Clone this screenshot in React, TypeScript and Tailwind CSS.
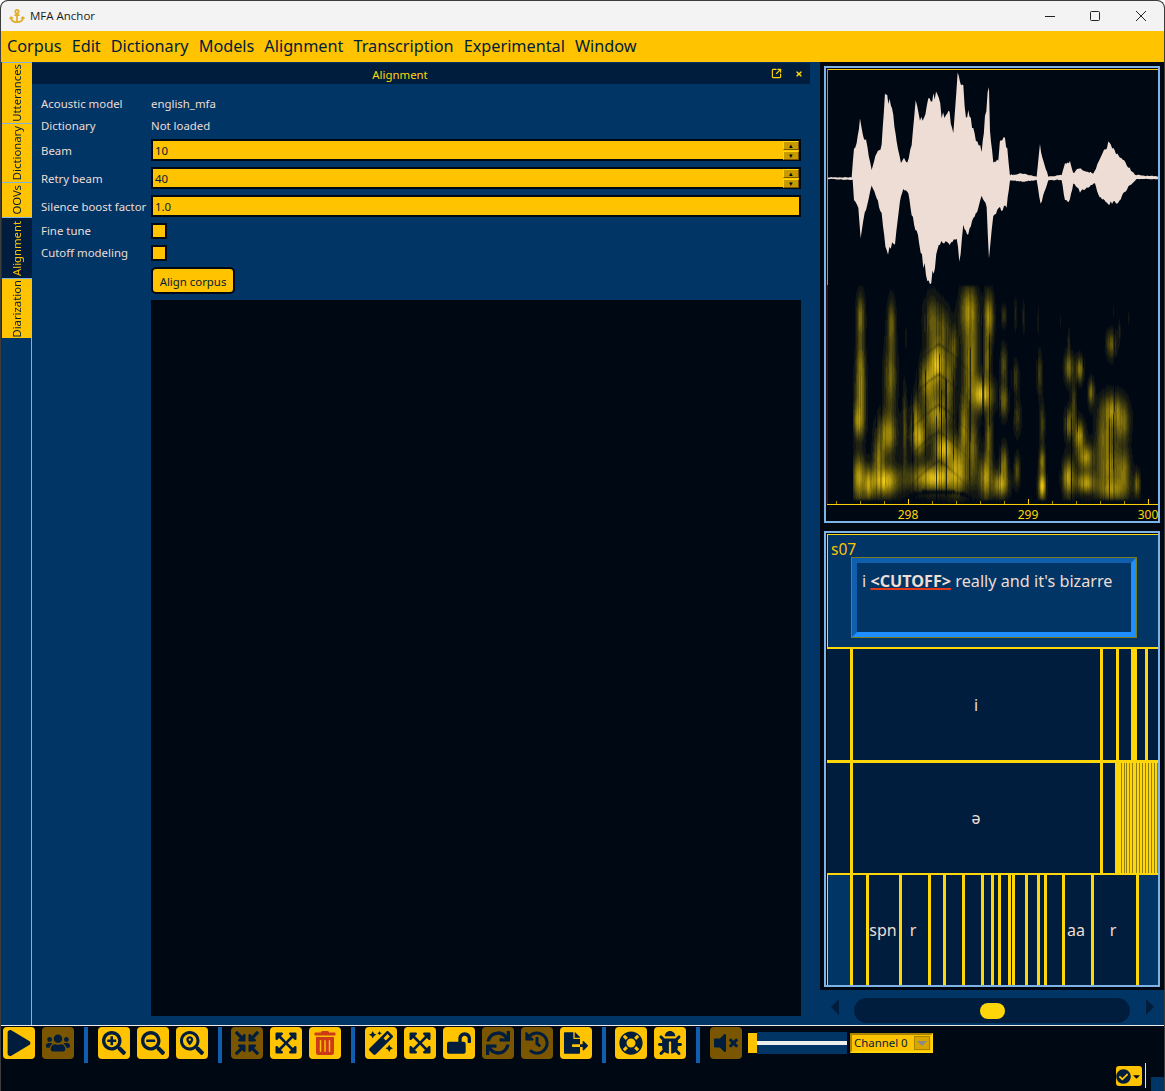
import React from "react";
import {
  FaPlay, FaUsers, FaSearchPlus, FaSearchMinus, FaSearchLocation, FaCompressArrowsAlt,
  FaExpandArrowsAlt, FaTrashAlt, FaMagic, FaLockOpen, FaSync, FaHistory, FaFileExport,
  FaLifeRing, FaBug, FaVolumeMute, FaCheckCircle, FaTimes, FaAnchor, FaCaretDown,
} from "react-icons/fa";
import { SquareArrowOutUpRight } from "lucide-react";

let seed = 7;
const rnd = () => ((seed = (seed * 16807) % 2147483647) / 2147483647);

const top = [[383,532],[455,532],[462,440],[470,435],[480,350],[488,400],[498,420],[515,512],[530,455],[545,440],[555,280],[565,300],[580,340],[590,430],[603,490],[612,475],[622,490],[635,430],[647,300],[660,350],[672,360],[685,300],[712,285],[725,340],[738,355],[745,330],[760,390],[773,210],[780,260],[790,270],[798,360],[805,330],[820,390],[832,430],[845,450],[855,360],[867,248],[870,390],[880,490],[895,480],[900,418],[915,420],[922,450],[930,525],[965,520],[1010,530],[1020,435],[1030,480],[1045,530],[1085,525],[1095,490],[1110,487],[1120,520],[1135,505],[1180,520],[1200,480],[1225,430],[1260,470],[1285,500],[1305,525],[1374,530]];
const bottom = [[1374,537],[1310,537],[1285,560],[1255,605],[1225,610],[1195,585],[1185,550],[1140,575],[1120,550],[1110,600],[1095,605],[1085,540],[1045,540],[1022,615],[1010,540],[970,545],[930,540],[920,620],[900,628],[880,640],[867,790],[860,620],[845,590],[835,630],[820,650],[805,700],[790,670],[778,795],[770,710],[745,740],[720,730],[690,858],[670,790],[650,700],[635,640],[625,580],[610,565],[600,600],[585,720],[560,760],[545,640],[515,555],[490,660],[482,718],[475,620],[462,600],[458,540],[383,537]];
function roughen(pts: number[][]) {
  const out: string[] = [];
  for (let i = 0; i < pts.length - 1; i++) {
    const [x0, y0] = pts[i];
    const [x1, y1] = pts[i + 1];
    const n = Math.max(1, Math.round(Math.abs(x1 - x0) / 4));
    for (let k = 0; k < n; k++) {
      const t = k / n;
      const y = y0 + (y1 - y0) * t;
      const amp = Math.min(14, Math.abs(y - 534) * 0.07) + 1;
      out.push(`${(x0 + (x1 - x0) * t).toFixed(1)},${(y + (rnd() - 0.5) * amp * 2).toFixed(1)}`);
    }
  }
  out.push(pts[pts.length - 1].join(","));
  return out;
}
const wave = [...roughen(top), ...roughen(bottom)].join(" ");

// cx, cy, rx, ry, strength, in the 3x crop's coordinates of the spectrogram
const blobs: number[][] = [
  [135,110,16,75,.65],[135,250,16,90,.55],[135,340,20,100,.65],[130,420,20,55,.8],[130,590,24,75,.85],[160,610,18,45,.8],
  [228,130,16,80,.55],[225,290,24,110,.6],[215,460,36,70,.8],[205,600,55,50,1],[190,530,20,60,.6],
  [268,440,9,130,.45],[272,170,4,40,.2],
  [350,120,30,80,.55],[385,140,24,70,.45],[365,250,32,80,1],[335,300,28,70,.75],[400,300,22,90,.55],
  [365,400,50,70,.8],[310,470,28,60,.85],[385,505,38,50,1],[360,590,100,45,1],[425,560,32,80,.8],
  [300,410,16,70,.55],[415,200,15,70,.5],
  [460,90,32,80,.75],[465,240,30,140,.7],[500,340,40,50,1],[520,110,18,80,.8],[515,240,14,80,.6],[445,440,14,100,.7],[520,470,14,100,.6],
  [470,500,22,110,.6],[510,590,24,70,.8],[555,610,30,42,.85],[565,550,15,60,.7],[565,360,16,55,.6],[565,250,13,60,.5],[565,105,11,35,.35],
  [600,100,7,55,.25],[625,110,6,55,.25],[600,290,13,55,.4],[605,410,16,60,.35],[605,570,12,50,.5],
  [668,120,4,45,.22],[672,280,11,70,.4],[680,430,11,70,.4],[680,540,12,40,.65],[680,615,15,45,1],
  [735,120,4,40,.15],[760,180,5,45,.25],[760,260,17,50,.65],[793,265,15,42,.7],[760,430,16,50,.65],[792,465,19,50,.85],
  [758,590,22,60,.85],[810,530,30,42,.8],[810,605,38,36,.85],[827,335,12,42,.65],[775,370,11,70,.4],
  [888,190,20,45,.55],[912,150,5,32,.25],[940,110,4,32,.15],[895,90,4,32,.15],
  [890,390,44,56,.75],[870,470,34,70,.6],[920,430,28,60,.6],[880,560,44,70,.7],[925,570,26,70,.6],[890,625,54,36,.7],[965,610,12,42,.6],
];
const chevApex = [190, 280, 372, 452, 540];

function buildSpectrogram() {
  const levels: string[] = Array.from({ length: 16 }, () => "");
  const X0 = 853, X1 = 1141, Y0 = 286, Y1 = 502;
  for (let x = X0; x < X1; x++) {
    const cx = (x - 815) * 3;
    const r = rnd();
    const col = r < 0.14 ? 0.15 + rnd() * 0.25 : 0.72 + rnd() * 0.28;
    const start = 20 + rnd() * 400;
    const len = 60 + rnd() * 300;
    for (let y = Y0; y < Y1; y += 2) {
      const cy = (y - 280) * 3;
      let keep = 1;
      for (const b of blobs) {
        const dx = (cx - b[0]) / (b[2] * 0.82);
        const dy = (cy - b[1]) / (b[3] * 0.95);
        const d = dx * dx + dy * dy;
        if (d < 6) keep *= 1 - b[4] * Math.exp(-d) * 0.88;
      }
      let v = Math.pow(1 - keep, 1.4);
      if (cy > start && cy < start + len) v *= col;
      else v *= 0.6 + col * 0.4;
      const off = Math.abs(cx - 370);
      if (off < 100) {
        for (const a of chevApex) {
          const curve = a + off * 0.62 + (off * off) / 300;
          const dist = Math.abs(cy - curve);
          if (dist < 10) v *= 1 - 0.6 * Math.exp(-(dist * dist) / 10) * (1 - off / 110);
        }
      }
      const base = off < 100 ? 650 - Math.sqrt(Math.max(0, 1 - (off / 90) ** 2)) * 18 : 662;
      if (Math.abs(cy - base) < 5) v *= 0.15;
      if (cy > 662) v *= 0.25;
      const li = Math.min(15, Math.round(v * 17));
      if (li > 0) levels[li] += `M${x} ${y}h1v2h-1z`;
    }
  }
  return levels;
}
const specLevels = buildSpectrogram();

function Signal() {
  return (
    <svg viewBox="826 68 332 453" className="block h-[453px] w-[332px] overflow-visible">
      <defs>
        <filter id="soft" x="-2%" y="-2%" width="104%" height="104%"><feGaussianBlur stdDeviation="0.35 1" /></filter>
      </defs>
      <g transform="translate(700 0) scale(0.3333)">
        <polygon points={wave} fill="#EDDDD4" />
      </g>
      <g filter="url(#soft)">
        {specLevels.map((d, i) => (d ? <path key={i} d={d} fill="#FFD60A" opacity={i / 15} /> : null))}
      </g>
      <g transform="translate(815 280) scale(0.3333)">
        <rect x="36" y="672" width="993" height="3" fill="#FFD60A" />
        {[280, 640, 1000].map((x) => <rect key={x} x={x - 1} y="657" width="3" height="15" fill="#FFD60A" />)}
        {[64, 136, 208, 352, 424, 496, 568, 712, 784, 856, 928].map((x) => <rect key={x} x={x} y="663" width="2" height="9" fill="#FFD60A" />)}
        <rect x="35" y="0" width="3" height="672" fill="#8a1010" />
      </g>
      {[[908, "298"], [1028, "299"], [1148, "300"]].map(([x, t]) => (
        <text key={t as string} x={x as number} y="519" textAnchor="middle" fontSize="12" fill="#FFD60A">{t}</text>
      ))}
      <rect x="827" y="69" width="331" height="1" fill="#FFC300" />
      <rect x="827" y="69" width="1" height="216" fill="#E8831A" />
    </svg>
  );
}

const row1 = [851, 1101, 1117, 1132, 1135, 1146];
const row3 = [851, 867, 900, 929, 944, 963, 982, 992, 999, 1009, 1013, 1026, 1038, 1045, 1063, 1092, 1137];
const dense = [1121, 1124, 1126, 1129, 1132, 1136, 1139, 1142, 1145, 1148, 1151, 1154, 1157];

function Bound({ x, base = 827 }: { x: number; base?: number }) {
  return <div className="absolute top-0 bottom-0 w-[3px] bg-[#FFD60A]" style={{ left: x - base - 1 }} />;
}
function TierLabel({ x, base = 827, children }: { x: number; base?: number; children: React.ReactNode }) {
  return (
    <span className="absolute top-1/2 -translate-x-1/2 -translate-y-1/2 text-[16px] leading-none text-[#EDDDD4]" style={{ left: x - base }}>
      {children}
    </span>
  );
}

function Btn({ icon: I, dim, red, px = 24 }: { icon: any; dim?: boolean; red?: boolean; px?: number }) {
  return (
    <div className={`flex h-8 w-8 shrink-0 items-center justify-center rounded-[4px] ${dim ? "bg-[#7A5600]" : "bg-[#FFC300]"} ${red ? "text-[#CC3A1A]" : "text-[#001D3D]"}`}>
      <I size={px} />
    </div>
  );
}
const Sep = ({ r = 10 }: { r?: number }) => (
  <div className="ml-[10px] h-9 w-1 shrink-0 self-start bg-[#0F5FAE]" style={{ marginRight: r }} />
);
const Gap = () => <div className="w-[7px] shrink-0" />;

function Spin() {
  return (
    <div className="flex h-full w-4 flex-col gap-px">
      {["▴", "▾"].map((g) => (
        <div key={g} className="flex flex-1 items-center justify-center border border-t-[#FFD60A] border-l-[#FFD60A] border-r-[#7A5600] border-b-[#7A5600] bg-[#C79A00] text-[7px] leading-none text-[#000814]">
          {g}
        </div>
      ))}
    </div>
  );
}

function NumInput({ v, spin }: { v: string; spin?: boolean }) {
  return (
    <div className="flex h-[22px] items-center justify-between border-2 border-[#000814] bg-[#FFC300] pl-[2px] text-[11.4px] leading-none text-[#001D3D]">
      <span className="pt-[2px]">{v}</span>
      {spin && <Spin />}
    </div>
  );
}
const Check = () => <div className="h-4 w-4 border-2 border-[#000814] bg-[#FFC300]" />;
const Lab = ({ children, low }: { children: React.ReactNode; low?: boolean }) => (
  <span className={`self-center whitespace-nowrap text-[11.4px] leading-none text-[#EDDDD4] ${low ? "pt-[2px]" : "pb-0"}`}>{children}</span>
);

const tabs = [
  { t: "Utterances", h: 61 },
  { t: "Dictionary", h: 59 },
  { t: "OOVs", h: 35 },
  { t: "Alignment", h: 61, active: true },
  { t: "Diarization", h: 60 },
];
const menu = ["Corpus", "Edit", "Dictionary", "Models", "Alignment", "Transcription", "Experimental", "Window"];

export default function App() {
  return (
    <div className="flex h-[1091px] w-[1165px] flex-col overflow-hidden rounded-t-lg border-x border-t border-[#3d3d3d] bg-[#000814] font-['Noto_Sans',sans-serif]">
      <div className="flex h-[30px] shrink-0 items-center bg-[#F3F3F3] pl-[8px] text-[11.5px] text-[#1a1a1a]">
        <FaAnchor size={16} className="text-[#E3AE2B]" />
        <span className="ml-[5px] flex-1 font-['Open_Sans',sans-serif]">MFA Anchor</span>
        <svg width="150" height="30" viewBox="0 0 150 30" fill="none" stroke="#222" strokeWidth="1">
          <path d="M31 15.5h10" />
          <rect x="76.5" y="10.5" width="9" height="9" rx="1" />
          <path d="M122 10l10 10M132 10l-10 10" />
        </svg>
      </div>
      <div className="flex h-[31px] shrink-0 items-center gap-[10px] bg-[#FFC300] pl-[6px] text-[16.25px] text-[#001D3D]">
        {menu.map((m) => <span key={m}>{m}</span>)}
      </div>

      <div className="flex min-h-0 flex-1">
        <div className="flex w-[31px] shrink-0 flex-col bg-[#003566] pl-px">
          {tabs.map((t) => (
            <div key={t.t} className={`flex items-center justify-center border-t border-[#7DB3E6] ${t.active ? "bg-[#001D3D] text-[#FFC300]" : "bg-[#FFC300] text-[#001D3D]"}`} style={{ height: t.h }}>
              <span className="rotate-180 text-[11.3px] leading-none [writing-mode:vertical-rl]">{t.t}</span>
            </div>
          ))}
          <div className="flex-1 border-r border-[#7DB3E6]" />
        </div>

        <div className="flex w-[788px] shrink-0 flex-col bg-[#003566] pr-[10px]">
          <div className="mt-px flex h-[21px] shrink-0 items-center bg-[#001D3D] text-[#FFD60A]">
            <span className="flex-1 pt-[2px] text-center text-[11.4px]">Alignment</span>
            <div className="flex w-[42px] items-center gap-[13px] pl-[3px]">
              <SquareArrowOutUpRight size={11} strokeWidth={2.5} />
              <FaTimes size={8} />
            </div>
          </div>
          <div className="grid min-h-0 flex-1 grid-cols-[110px_650px] grid-rows-[16px_15px_22px_22px_22px_16px_16px_27px_1fr] gap-y-[6px] pl-[9px] pt-[12px] pb-[9px]">
            <Lab>Acoustic model</Lab><Lab>english_mfa</Lab>
            <Lab>Dictionary</Lab><Lab>Not loaded</Lab>
            <Lab low>Beam</Lab><NumInput v="10" spin />
            <Lab low>Retry beam</Lab><NumInput v="40" spin />
            <Lab low>Silence boost factor</Lab><NumInput v="1.0" />
            <Lab>Fine tune</Lab><Check />
            <Lab>Cutoff modeling</Lab><Check />
            <div />
            <div className="flex h-[27px] w-[84px] items-center justify-center rounded-[5px] border-2 border-[#000814] bg-[#FFC300] pt-[2px] text-[11.4px] leading-none text-[#001D3D]">Align corpus</div>
            <div />
            <div className="bg-[#000814]" />
          </div>
        </div>

        <div className="flex min-w-0 flex-1 flex-col">
          <div className="flex min-h-0 flex-1 flex-col gap-[8px] px-[4px] pt-[4px] pb-[3px]">
            <div className="h-[457px] shrink-0 border-2 border-[#7DB3E6]">
              <Signal />
            </div>
            <div className="flex min-h-0 flex-1 flex-col border-2 border-[#7DB3E6] pl-px pt-px">
              <div className="flex h-[113px] shrink-0 flex-col border-t border-l border-[#FFD60A] bg-[#003566]">
                <span className="pl-[3px] pt-[4px] text-[15.5px] leading-[20px] text-[#FFC300]">s07</span>
                <div className="ml-[23px] mt-[-2px] h-[81px] w-[286px] border border-[#7a7a1e]">
                  <div className="h-full border-[5px] border-t-[#0F5FAE] border-l-[#0F5FAE] border-r-[#1F8FFF] border-b-[#1F8FFF] bg-[#003566] px-[5px] py-[7px] text-[16.2px] leading-[22px] text-[#EDDDD4]">
                    i <b className="[text-decoration:underline_2px_#E03A1A] [text-underline-offset:1px]">&lt;CUTOFF&gt;</b> really and it's bizarre
                  </div>
                </div>
              </div>
              <div className="relative h-[113px] shrink-0 border-t-2 border-[#FFD60A] bg-[#001D3D]">
                {row1.map((x) => <Bound key={x} x={x} />)}
                <TierLabel x={976}>i</TierLabel>
              </div>
              <div className="relative h-[115px] shrink-0 border-t-[3px] border-b-2 border-[#FFD60A] bg-[#001D3D]">
                <Bound x={851} /><Bound x={1101} />
                <div className="absolute top-0 bottom-0 left-[288px] right-0 bg-[#FFD60A]" />
                {dense.map((x) => <div key={x} className="absolute top-0 bottom-0 w-px bg-[#8F7F12]" style={{ left: x - 827 }} />)}
                <TierLabel x={976}>ə</TierLabel>
              </div>
              <div className="flex min-h-0 flex-1 border-l border-[#FFD60A] bg-[#003566]">
                <div className="relative w-full">
                  <div className="absolute top-0 bottom-0 left-[22px] w-[287px] bg-[#001D3D]" />
                  {row3.map((x) => <Bound key={x} x={x} base={828} />)}
                  <TierLabel x={883} base={828}>spn</TierLabel>
                  <TierLabel x={913} base={828}>r</TierLabel>
                  <TierLabel x={1076} base={828}>aa</TierLabel>
                  <TierLabel x={1113} base={828}>r</TierLabel>
                </div>
              </div>
            </div>
          </div>
          <div className="flex h-[35px] shrink-0 items-center bg-[#003566] pb-[1px]">
            <svg width="34" height="16" viewBox="0 0 34 16" className="shrink-0"><path d="M19 0v16L11 8z" fill="#001D3D" /></svg>
            <div className="mt-[7px] flex h-[25px] w-[276px] shrink-0 items-center justify-center rounded-full bg-[#001D3D] pl-px">
              <div className="h-4 w-[25px] rounded-full bg-[#FFD60A]" />
            </div>
            <svg width="34" height="16" viewBox="0 0 34 16" className="shrink-0"><path d="M16 0v16l8-8z" fill="#001D3D" /></svg>
          </div>
        </div>
      </div>

      <div className="relative h-[66px] shrink-0 border-t border-[#EDEDED] bg-[#000814] pl-[2px]">
        <div className="flex items-start pt-px">
          <Btn icon={FaPlay} px={26} />
          <Gap />
          <Btn icon={FaUsers} dim />
          <Sep />
          <Btn icon={FaSearchPlus} />
          <Gap />
          <Btn icon={FaSearchMinus} />
          <Gap />
          <Btn icon={FaSearchLocation} />
          <Sep r={9} />
          <Btn icon={FaCompressArrowsAlt} dim />
          <Gap />
          <Btn icon={FaExpandArrowsAlt} />
          <Gap />
          <Btn icon={FaTrashAlt} red />
          <Sep />
          <Btn icon={FaMagic} />
          <Gap />
          <Btn icon={FaExpandArrowsAlt} />
          <Gap />
          <Btn icon={FaLockOpen} />
          <Gap />
          <Btn icon={FaSync} dim />
          <Gap />
          <Btn icon={FaHistory} dim />
          <Gap />
          <Btn icon={FaFileExport} />
          <Sep r={9} />
          <Btn icon={FaLifeRing} />
          <Gap />
          <Btn icon={FaBug} />
          <Sep />
          <Btn icon={FaVolumeMute} dim />
          <div className="ml-[6px] mt-[6px] h-5 w-[9px] shrink-0 bg-[#FFC300]" />
          <div className="mt-[5px] flex h-[22px] w-[90px] shrink-0 items-center bg-[#003566]">
            <div className="h-1 w-full bg-[#EDEDED]" />
          </div>
          <div className="ml-[3px] mt-[6px] flex h-5 w-[83px] shrink-0 items-center justify-between border-2 border-t-[#A88400] border-l-[#A88400] border-r-[#FFD60A] border-b-[#FFD60A] bg-[#FFC300] pl-[2px] text-[11.4px] leading-none text-[#001D3D]">
            <span>Channel 0</span>
            <div className="mr-px flex h-[14px] w-4 items-center justify-center border border-[#A88400] bg-[#D9A600]">
              <div className="h-0 w-0 border-x-[5px] border-t-[5px] border-x-transparent border-t-[#8a8a8a]" />
            </div>
          </div>
        </div>
        <div className="absolute bottom-[5px] right-[22px] flex h-5 w-[26px] items-center rounded-[3px] bg-[#FFC300] text-[#001D3D]">
          <FaCheckCircle size={15} />
          <FaCaretDown size={11} className="text-[#000814]" />
        </div>
        <div className="absolute bottom-[3px] right-[18px] h-[25px] w-px bg-[#EDDDD4]" />
        <div className="absolute bottom-0 right-0 h-[14px] w-[13px] bg-[#003566]" />
      </div>
    </div>
  );
}
